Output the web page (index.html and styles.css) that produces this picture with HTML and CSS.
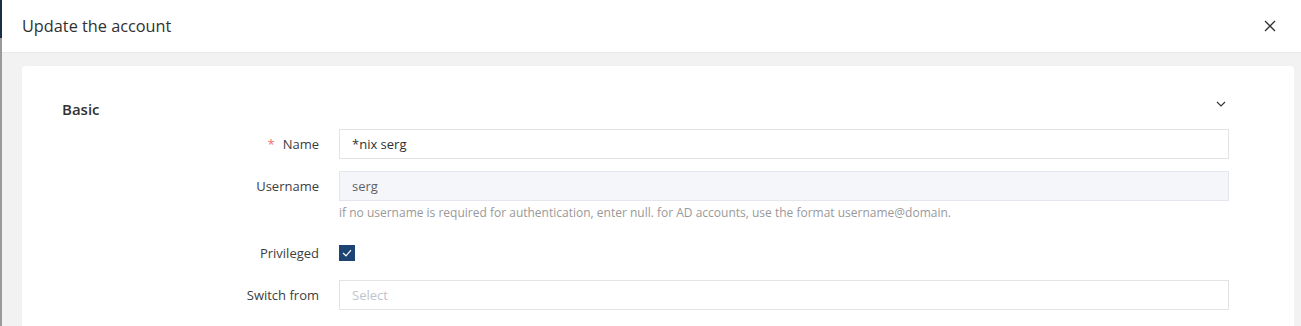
FILE: index.html
```html
<!DOCTYPE html>
<html lang="en">
<head>
  <meta charset="UTF-8">
  <meta name="viewport" content="width=device-width, initial-scale=1.0">
  <title>Update the account</title>
  <link rel="stylesheet" href="styles.css">
</head>
<body>
  <div class="page">
    <div class="edge"></div>

    <div class="dialog">
      <div class="dialog-header">
        <span class="dialog-title">Update the account</span>
        <svg class="close" width="12" height="12" viewBox="0 0 12 12">
          <path d="M1 1 L11 11 M11 1 L1 11" stroke="#303133" stroke-width="1.3" fill="none"/>
        </svg>
      </div>

      <div class="dialog-body">
        <div class="card">
          <div class="section-head">
            <span class="section-title">Basic</span>
            <svg class="chevron" width="10" height="6" viewBox="0 0 10 6">
              <path d="M1 1 L5 5 L9 1" stroke="#303133" stroke-width="1.1" fill="none"/>
            </svg>
          </div>

          <div class="form">
            <div class="form-item">
              <label class="form-label"><span class="req">*</span>Name</label>
              <div class="form-field">
                <div class="input">*nix serg</div>
              </div>
            </div>

            <div class="form-item">
              <label class="form-label">Username</label>
              <div class="form-field">
                <div class="input disabled">serg</div>
                <div class="help">if no username is required for authentication, enter null. for AD accounts, use the format username@domain.</div>
              </div>
            </div>

            <div class="form-item">
              <label class="form-label">Privileged</label>
              <div class="form-field">
                <span class="checkbox">
                  <svg width="10" height="8" viewBox="0 0 10 8">
                    <path d="M1 4 L4 6.8 L9 1.2" stroke="#fff" stroke-width="1.2" fill="none"/>
                  </svg>
                </span>
              </div>
            </div>

            <div class="form-item">
              <label class="form-label">Switch from</label>
              <div class="form-field">
                <div class="input placeholder">Select</div>
              </div>
            </div>
          </div>
        </div>
      </div>
    </div>
  </div>
</body>
</html>
```

FILE: styles.css
```css
body {
  margin: 0;
  padding: 0;
  font-family: "Open Sans", "Noto Sans", sans-serif;
  background-color: #9a9a9a;
  overflow: hidden;
}

.page {
  display: flex;
  height: 326px;
}

.edge {
  width: 2px;
  background: linear-gradient(#1b2e48 0 38px, #9a9a9a 38px);
}

.dialog {
  flex: 1;
  display: flex;
  flex-direction: column;
  background-color: #f2f2f2;
}

.dialog-header {
  height: 52px;
  flex-shrink: 0;
  display: flex;
  align-items: center;
  justify-content: space-between;
  padding: 0 25px 0 20px;
  background-color: #fff;
  border-bottom: 1px solid #e9e9e9;
}

.dialog-title {
  font-size: 16.3px;
  color: #303133;
  margin-top: -1px;
}

.close {
  margin-top: -1px;
}

.dialog-body {
  flex: 1;
  padding: 13px 7px 0 20px;
}

.card {
  background-color: #fff;
  border-radius: 4px 4px 0 0;
  height: 100%;
  padding: 32px 65px 0 40px;
  box-sizing: border-box;
}

.section-head {
  display: flex;
  align-items: center;
  justify-content: space-between;
  height: 22px;
  margin-bottom: 9px;
}

.section-title {
  font-size: 15px;
  font-weight: 600;
  color: #303133;
}

.chevron {
  margin-right: 3px;
  margin-top: -10px;
}

.form-item {
  display: flex;
  align-items: flex-start;
  margin-bottom: 12px;
}

.form-label {
  width: 277px;
  flex-shrink: 0;
  height: 30px;
  line-height: 30px;
  text-align: right;
  padding-right: 20px;
  box-sizing: border-box;
  font-size: 13px;
  color: #3d3d3d;
}

.form-label .req {
  color: #f56c6c;
  margin-right: 8px;
}

.form-field {
  flex: 1;
  min-height: 30px;
  display: flex;
  flex-direction: column;
  justify-content: center;
}

.input {
  height: 30px;
  line-height: 28px;
  box-sizing: border-box;
  border: 1px solid #e3e3e3;
  padding: 0 12px;
  font-size: 13px;
  color: #303133;
  background-color: #fff;
}

.input.disabled {
  background-color: #f5f6fa;
  border-color: #e4e6ee;
  color: #606266;
}

.input.placeholder {
  color: #c0c4cc;
}

.help {
  margin: 4px 0 5px;
  line-height: 16px;
  font-size: 12px;
  color: #999;
}

.checkbox {
  width: 16px;
  height: 16px;
  background-color: #1d4372;
  display: flex;
  align-items: center;
  justify-content: center;
}
```
